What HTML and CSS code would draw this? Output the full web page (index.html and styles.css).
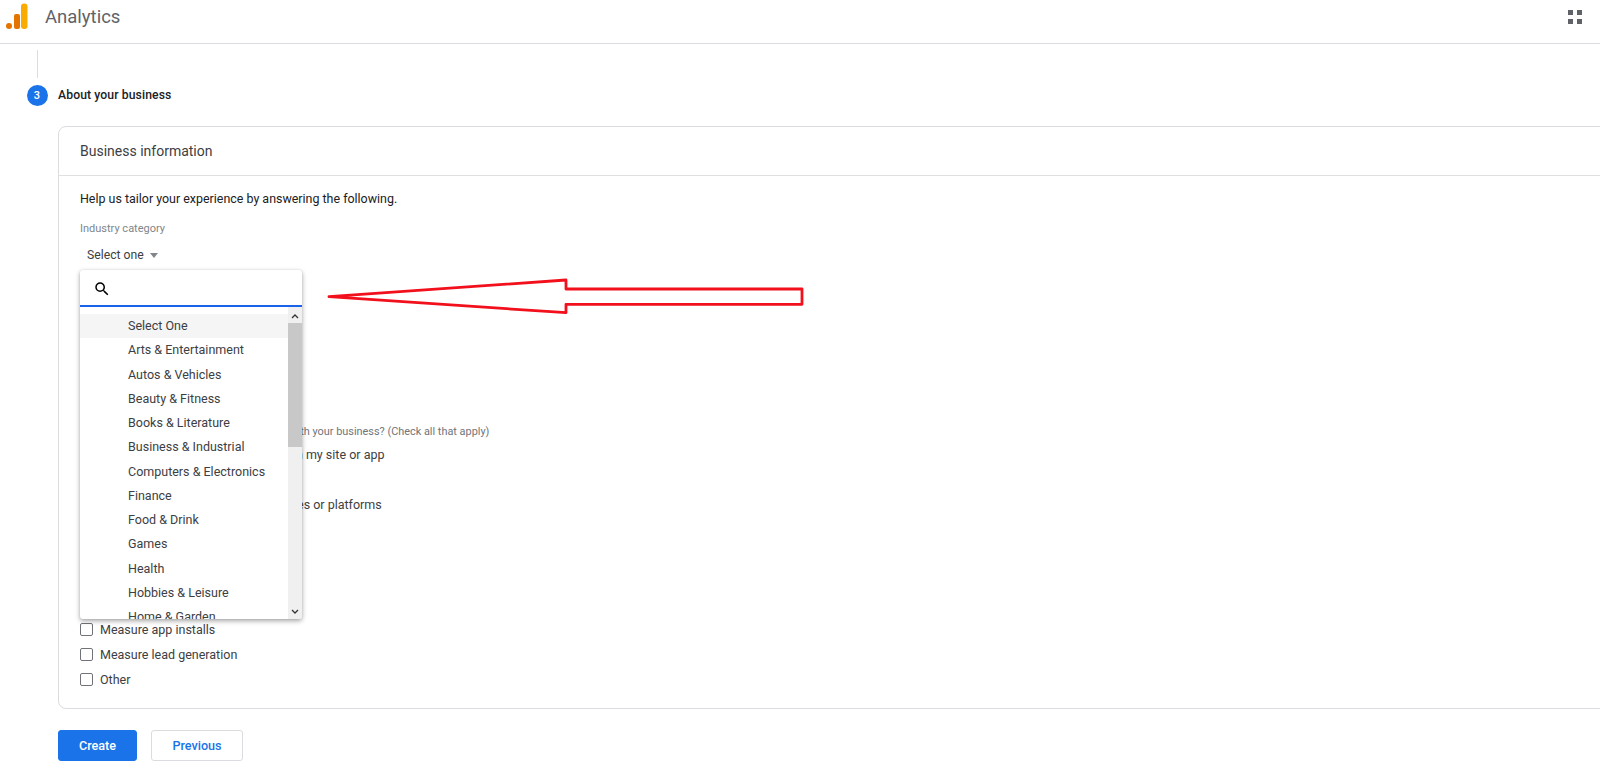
FILE: index.html
```html
<!DOCTYPE html>
<html lang="en">
<head>
<meta charset="utf-8">
<title>Analytics</title>
<link rel="stylesheet" href="styles.css">
</head>
<body>
<header class="topbar">
  <svg class="logo" width="28" height="30" viewBox="0 0 28 30" aria-hidden="true">
    <circle cx="9" cy="26" r="3" fill="#e37400"/>
    <rect x="14" y="14" width="6" height="15" rx="2" fill="#e37400"/>
    <rect x="21" y="3.5" width="6.5" height="25.5" rx="3" fill="#f9ab00"/>
  </svg>
  <span class="product">Analytics</span>
  <svg class="apps" width="14" height="14" viewBox="0 0 14 14" aria-hidden="true">
    <rect x="0" y="0" width="5" height="5"/><rect x="9" y="0" width="5" height="5"/>
    <rect x="0" y="9" width="5" height="5"/><rect x="9" y="9" width="5" height="5"/>
  </svg>
</header>
<main class="page">
  <div class="connector"></div>
  <div class="step">
    <span class="step-num">3</span>
    <span class="step-title">About your business</span>
  </div>
  <section class="card">
    <h2 class="card-title">Business information</h2>
    <div class="card-body">
      <p class="intro">Help us tailor your experience by answering the following.</p>
      <div class="field">
        <div class="field-label">Industry category</div>
        <div class="select">Select one <span class="caret"></span></div>
        <div class="dropdown">
          <div class="search">
            <svg width="18" height="18" viewBox="0 0 24 24" aria-hidden="true"><path d="M15.5 14h-.79l-.28-.27A6.47 6.47 0 0 0 16 9.5 6.5 6.5 0 1 0 9.5 16c1.61 0 3.09-.59 4.23-1.57l.27.28v.79l5 4.99L20.49 19l-4.99-5zm-6 0C7.01 14 5 11.99 5 9.5S7.01 5 9.5 5 14 7.01 14 9.5 11.99 14 9.5 14z" fill="#000"/></svg>
          </div>
          <div class="list-wrap">
            <ul class="list">
              <li class="active">Select One</li>
              <li>Arts &amp; Entertainment</li>
              <li>Autos &amp; Vehicles</li>
              <li>Beauty &amp; Fitness</li>
              <li>Books &amp; Literature</li>
              <li>Business &amp; Industrial</li>
              <li>Computers &amp; Electronics</li>
              <li>Finance</li>
              <li>Food &amp; Drink</li>
              <li>Games</li>
              <li>Health</li>
              <li>Hobbies &amp; Leisure</li>
              <li>Home &amp; Garden</li>
            </ul>
            <div class="scrollbar">
              <svg class="sb-arrow" width="8" height="5" viewBox="0 0 8 5" aria-hidden="true"><path d="M1 4l3-3 3 3" fill="none" stroke="#333" stroke-width="1.3"/></svg>
              <div class="thumb"></div>
              <svg class="sb-arrow sb-down" width="8" height="5" viewBox="0 0 8 5" aria-hidden="true"><path d="M1 1l3 3 3-3" fill="none" stroke="#333" stroke-width="1.3"/></svg>
            </div>
          </div>
        </div>
      </div>
      <div class="field-label usage-label">How do you intend to use Google Analytics with your business? (Check all that apply)</div>
      <ul class="checks">
        <li><span class="box"></span>Measure customers' engagement on my site or app</li>
        <li><span class="box"></span>Optimize my site or app experience</li>
        <li><span class="box"></span>Measure data across multiple devices or platforms</li>
        <li><span class="box"></span>Optimize my advertising cost</li>
        <li><span class="box"></span>Increase my conversions</li>
        <li><span class="box"></span>Measure content monetization</li>
        <li><span class="box"></span>Analyze my online sales</li>
        <li><span class="box"></span>Measure app installs</li>
        <li><span class="box"></span>Measure lead generation</li>
        <li><span class="box"></span>Other</li>
      </ul>
    </div>
  </section>
  <div class="actions">
    <button class="btn primary">Create</button>
    <button class="btn secondary">Previous</button>
  </div>
</main>
<svg class="arrow" width="490" height="45" viewBox="320 272 490 45" aria-hidden="true">
  <path d="M329 296.7L566 280V289H802V304.3H566V312.7Z" fill="none" stroke="#f2101c" stroke-width="2.8" stroke-linejoin="round"/>
</svg>
</body>
</html>
```
FILE: styles.css
```css
* { box-sizing: border-box; }
html, body { margin: 0; height: 768px; overflow: hidden; background: #fff; }
body { font-family: Roboto, "Liberation Sans", sans-serif; font-size: 13px; color: #3c4043; position: relative; }
ul { list-style: none; margin: 0; padding: 0; }

.topbar { height: 44px; border-bottom: 1px solid #dadce0; display: flex; align-items: flex-start; }
.logo { display: block; flex: none; }
.product { margin: 4px 0 0 17px; font-size: 18.5px; line-height: 26px; color: #5f6368; }
.apps { margin: 10px 18px 0 auto; fill: #5f6368; }

.page { padding-left: 58px; position: relative; }
.connector { width: 1px; height: 28px; background: #dadce0; margin: 6px 0 0 -21px; }
.step { display: flex; align-items: center; height: 22px; margin: 6px 0 0 -31px; }
.step-num { width: 21px; height: 21px; border-radius: 50%; background: #1a73e8; color: #fff; font-size: 11px; font-weight: 500; display: flex; align-items: center; justify-content: center; padding-right: 1px; }
.step-title { margin: -1px 0 0 10px; font-size: 12.2px; font-weight: 500; color: #202124; letter-spacing: .1px; }

.card { margin-top: 20px; width: 1560px; height: 583px; border: 1px solid #dadce0; border-radius: 8px; }
.card-title { margin: 0; height: 49px; padding-left: 21px; line-height: 48px; font-size: 14px; font-weight: 400; color: #3c4043; border-bottom: 1px solid #e0e0e0; }
.card-body { padding: 14px 0 0 21px; }
.intro { margin: 0; line-height: 18px; font-size: 12.45px; color: #202124; }

.field { position: relative; margin-top: 14px; height: 203px; }
.field-label { font-size: 11px; line-height: 14px; color: #80868b; }
.select { margin: 11px 0 0 7px; font-size: 12.2px; line-height: 16px; color: #3c4043; display: flex; align-items: center; }
.caret { margin-left: 6px; border: 4.5px solid transparent; border-top: 5px solid #80868b; border-bottom: 0; }

.dropdown { position: absolute; left: 0; top: 48px; width: 222px; height: 349px; background: #fff; border-radius: 3px; box-shadow: 0 2px 5px rgba(0,0,0,.35), 0 0 2px rgba(0,0,0,.1); z-index: 2; display: flex; flex-direction: column; overflow: hidden; }
.search { height: 37px; flex: none; border-bottom: 2px solid #1a62e8; padding: 10px 0 0 13px; }
.search svg { display: block; }
.list-wrap { flex: 1; min-height: 0; display: flex; }
.list { flex: 1; padding-top: 7px; overflow: hidden; }
.list li { height: 24.25px; line-height: 24px; padding-left: 48px; font-size: 12.5px; color: #3c4043; white-space: nowrap; }
.list li.active { background: #f5f5f5; }
.scrollbar { width: 14px; flex: none; background: #f0f0f0; display: flex; flex-direction: column; align-items: center; }
.sb-arrow { flex: none; margin-top: 7px; }
.thumb { width: 100%; height: 124px; margin-top: 4px; background: #c8c8c8; }
.sb-down { margin-top: auto; margin-bottom: 5px; }

.usage-label { font-size: 10.9px; color: #70757a; white-space: nowrap; }
.checks { margin-top: 3px; }
.checks li { height: 25px; display: flex; align-items: center; font-size: 12.5px; color: #3c4043; white-space: nowrap; }
.box { width: 13px; height: 13px; flex: none; border: 1.5px solid #6f7377; border-radius: 2px; margin-right: 7px; }

.actions { display: flex; gap: 14px; margin-top: 21px; }
.btn { height: 31px; border-radius: 3px; font: 500 12.6px Roboto, sans-serif; padding: 0; }
.primary { width: 79px; background: #1a73e8; border: 1px solid #1a73e8; color: #fff; }
.secondary { width: 92px; background: #fff; border: 1px solid #dadce0; color: #1a73e8; }

.arrow { position: absolute; left: 320px; top: 272px; z-index: 5; }
```
